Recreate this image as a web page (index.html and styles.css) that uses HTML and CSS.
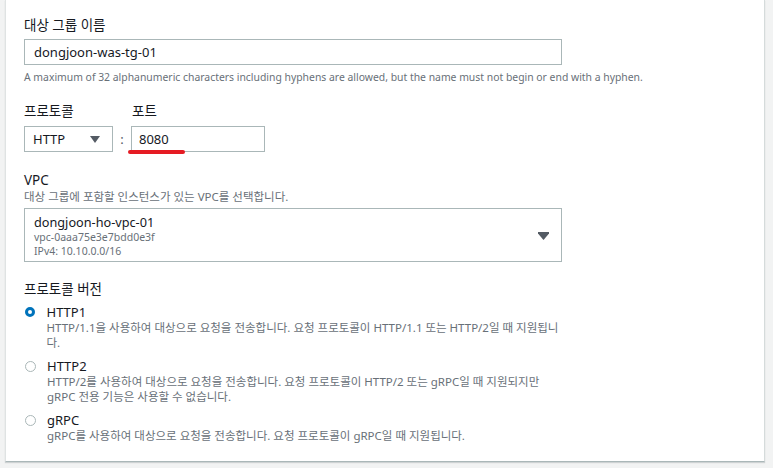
FILE: index.html
```html
<!DOCTYPE html>
<html lang="ko">
<head>
<meta charset="utf-8">
<link rel="stylesheet" href="styles.css">
</head>
<body>
<div class="card">
  <div class="form">
    <div class="label">대상 그룹 이름</div>
    <div class="input wide">dongjoon-was-tg-01</div>
    <div class="hint">A maximum of 32 alphanumeric characters including hyphens are allowed, but the name must not begin or end with a hyphen.</div>

    <div class="proto-row">
      <div class="proto-col">
        <div class="label">프로토콜</div>
        <div class="select small">
          <span>HTTP</span>
          <svg class="caret" width="10" height="7" viewBox="0 0 10 7"><path d="M0 0H10L5 7Z" fill="#545b64"/></svg>
        </div>
      </div>
      <div class="colon">:</div>
      <div class="port-col">
        <div class="label">포트</div>
        <div class="input port">8080</div>
        <span class="mark"></span>
      </div>
    </div>

    <div class="label vpc-label">VPC</div>
    <div class="desc">대상 그룹에 포함할 인스턴스가 있는 VPC를 선택합니다.</div>
    <div class="select vpc">
      <div class="vpc-text">
        <div class="vpc-name">dongjoon-ho-vpc-01</div>
        <div class="vpc-sub">vpc-0aaa75e3e7bdd0e3f</div>
        <div class="vpc-sub">IPv4: 10.10.0.0/16</div>
      </div>
      <svg class="caret" width="11" height="8" viewBox="0 0 11 8"><path d="M0 0H11V1.5L5.5 8L0 1.5Z" fill="#545b64"/></svg>
    </div>

    <div class="label version-label">프로토콜 버전</div>
    <div class="radios">
      <div class="radio-item">
        <span class="radio checked"></span>
        <div class="radio-body">
          <div class="radio-label">HTTP1</div>
          <div class="radio-desc">HTTP/1.1을 사용하여 대상으로 요청을 전송합니다. 요청 프로토콜이 HTTP/1.1 또는 HTTP/2일 때 지원됩니다.</div>
        </div>
      </div>
      <div class="radio-item">
        <span class="radio"></span>
        <div class="radio-body">
          <div class="radio-label">HTTP2</div>
          <div class="radio-desc">HTTP/2를 사용하여 대상으로 요청을 전송합니다. 요청 프로토콜이 HTTP/2 또는 gRPC일 때 지원되지만 gRPC 전용 기능은 사용할 수 없습니다.</div>
        </div>
      </div>
      <div class="radio-item">
        <span class="radio"></span>
        <div class="radio-body">
          <div class="radio-label">gRPC</div>
          <div class="radio-desc">gRPC를 사용하여 대상으로 요청을 전송합니다. 요청 프로토콜이 gRPC일 때 지원됩니다.</div>
        </div>
      </div>
    </div>
  </div>
</div>
</body>
</html>
```
FILE: styles.css
```css
* { box-sizing: border-box; }
html, body { margin: 0; padding: 0; }
body {
  background: #f2f3f3;
  width: 773px;
  height: 468px;
  overflow: hidden;
  padding: 0 8px 0 5px;
  font-family: "Noto Sans", "Noto Sans CJK KR", sans-serif;
  color: #16191f;
}
.card {
  background: #fff;
  border-left: 1px solid #dfe3e3;
  border-right: 1px solid #d5dbdb;
  border-bottom: 1px solid #aab7b8;
  box-shadow: 0 1px 1px rgba(0, 28, 36, 0.15);
  height: 462px;
  padding: 17px 0 0 18px;
}
.form { width: 538px; }
.label {
  font-size: 13.5px;
  line-height: 16px;
  color: #16191f;
}
.input, .select {
  border: 1px solid #aab7b8;
  background: #fff;
  font-size: 13px;
  color: #16191f;
}
.input {
  height: 26px;
  line-height: 24px;
  padding: 0 9px;
}
.wide { margin-top: 6px; }
.hint {
  margin-top: 5px;
  font-size: 10.4px;
  line-height: 14px;
  color: #687078;
  white-space: nowrap;
}
.proto-row {
  display: flex;
  align-items: flex-end;
  margin-top: 19px;
}
.proto-col .select { margin-top: 7px; }
.select.small {
  width: 89px;
  height: 26px;
  display: flex;
  align-items: center;
  justify-content: space-between;
  padding: 0 12px 0 8px;
}
.colon {
  width: 18px;
  text-align: center;
  font-size: 13px;
  line-height: 26px;
  color: #545b64;
}
.port-col { position: relative; }
.port-col .label { padding-left: 1px; }
.input.port {
  margin-top: 7px;
  width: 134px;
  padding: 0 7px;
}
.mark {
  position: absolute;
  left: -3px;
  bottom: -2px;
  width: 57px;
  height: 4px;
  border-radius: 2px;
  background: #e51b23;
}
.vpc-label { margin-top: 20px; }
.desc {
  margin-top: 2px;
  font-size: 11.5px;
  line-height: 14px;
  color: #687078;
}
.select.vpc {
  margin-top: 4px;
  height: 54px;
  display: flex;
  align-items: center;
  justify-content: space-between;
  padding: 0 12px 0 9px;
}
.vpc-text { align-self: flex-start; padding-top: 5px; }
.vpc-name { font-size: 12.7px; line-height: 16px; }
.vpc-sub { font-size: 10.5px; line-height: 14px; color: #687078; }
.vpc .caret { margin-top: 2px; }
.version-label { margin-top: 19px; }
.radios {
  margin-top: 7px;
  display: flex;
  flex-direction: column;
  gap: 8px;
}
.radio-item {
  display: flex;
  align-items: flex-start;
}
.radio {
  flex: none;
  width: 11px;
  height: 11px;
  border-radius: 50%;
  border: 1px solid #aab7b8;
  margin: 2.5px 11px 0 1px;
  background: #fff;
}
.radio.checked {
  border: 3.5px solid #0073bb;
  width: 10px;
  height: 10px;
  margin: 3px 11.5px 0 1px;
}
.radio-body { width: 516px; }
.radio-label { font-size: 13px; line-height: 16px; }
.radio-desc {
  font-size: 11.5px;
  line-height: 14.5px;
  color: #687078;
  margin-top: 1px;
}
```
